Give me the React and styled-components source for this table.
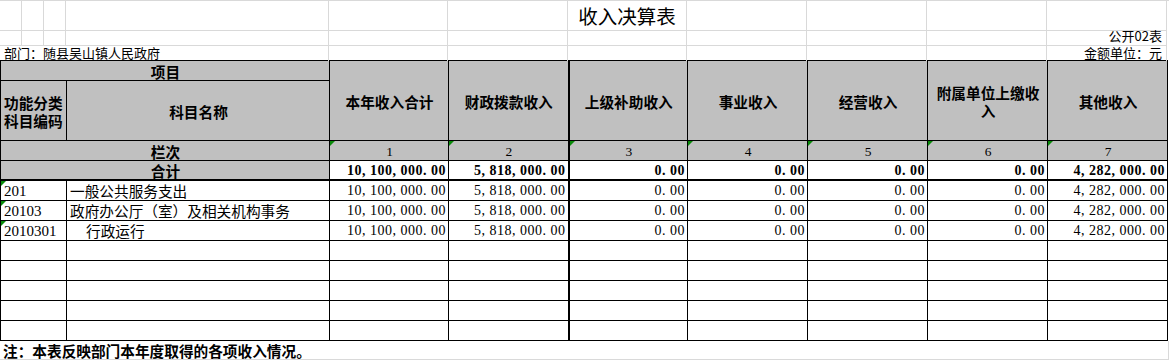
import React from "react";
import styled, { createGlobalStyle } from "styled-components";

const GlobalStyle = createGlobalStyle`
  body {
    margin: 0;
    background: #fff;
  }
`;

const COLS = [22, 22, 22, 263, 119, 120, 119, 120, 120, 120, 120];
const GRID = "#d9d9d9";
const HEAD_BG = "#c0c0c0";

const Sheet = styled.div`
  width: 1169px;
  font-family: "Noto Sans CJK SC", "Liberation Sans", sans-serif;
  color: #000;
`;

const TopRow = styled.div`
  display: grid;
  grid-template-columns: ${COLS.map((w) => w + "px").join(" ")};
  height: ${(p) => p.$h}px;
  border-top: ${(p) => (p.$first ? `1px solid ${GRID}` : "none")};
  box-sizing: border-box;
`;

const TopCell = styled.div`
  grid-column: span ${(p) => p.$span || 1};
  box-sizing: border-box;
  border-right: 1px solid ${GRID};
  border-bottom: ${(p) => (p.$last ? "none" : `1px solid ${GRID}`)};
  display: flex;
  align-items: center;
  justify-content: ${(p) =>
    p.$align === "right" ? "flex-end" : p.$align === "center" ? "center" : "flex-start"};
  padding: 0 4px;
  font-size: ${(p) => p.$size || 13}px;
  white-space: nowrap;
  overflow: visible;
`;

const Table = styled.table`
  border-collapse: collapse;
  table-layout: fixed;
  width: 1168px;
`;

const Row = styled.tr`
  height: ${(p) => p.$h}px;
`;

const Cell = styled.td`
  position: relative;
  box-sizing: border-box;
  border: 1px solid #000;
  border-left-width: ${(p) => (p.$thickLeft ? 2 : 1)}px;
  border-bottom-width: ${(p) => (p.$thickBottom ? 2 : 1)}px;
  background: ${(p) => (p.$head ? HEAD_BG : "#fff")};
  text-align: ${(p) => p.$align || "left"};
  vertical-align: middle;
  padding: 2px 2px 0 ${(p) => (p.$indent ? 19 : 3)}px;
  font-size: ${(p) => p.$size || 14.67}px;
  font-weight: ${(p) => (p.$bold ? 700 : 400)};
  line-height: ${(p) => (p.$wrap ? 18 : 16)}px;
  white-space: ${(p) => (p.$wrap ? "normal" : "nowrap")};
  overflow: hidden;
`;

const Num = styled.span`
  display: inline-block;
  vertical-align: top;
  line-height: 16px;
  font-family: "Liberation Serif", serif;
  font-size: ${(p) => p.$size || 14}px;
  letter-spacing: ${(p) => (p.$tight ? 0 : 0.5)}px;
`;

const Mark = styled.i`
  position: absolute;
  top: 0;
  left: 0;
  width: 0;
  height: 0;
  border-top: 5px solid #0a8a0a;
  border-right: 5px solid transparent;
`;

const Note = styled.div`
  height: 19px;
  box-sizing: border-box;
  border-bottom: 1px solid ${GRID};
  border-right: 1px solid ${GRID};
  padding: 2px 0 0 3px;
  font-size: 14.67px;
  font-weight: 700;
  line-height: 16px;
  white-space: nowrap;
`;

const HEADS = [
  "本年收入合计",
  "财政拨款收入",
  "上级补助收入",
  "事业收入",
  "经营收入",
  "附属单位上缴收入",
  "其他收入",
];

const VALS = [
  "10, 100, 000. 00",
  "5, 818, 000. 00",
  "0. 00",
  "0. 00",
  "0. 00",
  "0. 00",
  "4, 282, 000. 00",
];

const DATA = [
  { code: "201", name: "一般公共服务支出" },
  { code: "20103", name: "政府办公厅（室）及相关机构事务" },
  { code: "2010301", name: "行政运行", indent: true },
];

const topCells = (content) => COLS.map((_, i) => content[i] || null);

const App = () => {
  return (
    <Sheet>
      <GlobalStyle />
      <TopRow $h={26} $first>
        {topCells({ 6: "收入决算表" }).map((t, i) => (
          <TopCell key={i} $align="center" $size={19.5}>
            {t}
          </TopCell>
        ))}
      </TopRow>
      <TopRow $h={17}>
        {topCells({ 10: "公开02表" }).map((t, i) => (
          <TopCell key={i} $align="right">
            {t}
          </TopCell>
        ))}
      </TopRow>
      <TopRow $h={17}>
        <TopCell $span={4} $last>
          部门：随县吴山镇人民政府
        </TopCell>
        {COLS.slice(4).map((_, i) => (
          <TopCell key={i} $last $align="right">
            {i === 6 ? "金额单位：元" : null}
          </TopCell>
        ))}
      </TopRow>

      <Table>
        <colgroup>
          {COLS.map((w, i) => (
            <col key={i} style={{ width: w }} />
          ))}
        </colgroup>
        <tbody>
          <Row $h={20}>
            <Cell colSpan={4} $head $bold $align="center">
              项目
            </Cell>
            {HEADS.map((h, i) => (
              <Cell
                key={h}
                rowSpan={2}
                $head
                $bold
                $wrap
                $align="center"
                $thickLeft={i === 2}
              >
                {h}
              </Cell>
            ))}
          </Row>
          <Row $h={60}>
            <Cell colSpan={3} $head $bold $wrap>
              功能分类科目编码
            </Cell>
            <Cell $head $bold $align="center">
              科目名称
            </Cell>
          </Row>
          <Row $h={20}>
            <Cell colSpan={4} $head $bold $align="center">
              栏次
            </Cell>
            {HEADS.map((h, i) => (
              <Cell key={h} $head $align="center" $thickLeft={i === 2}>
                <Mark />
                <Num $tight $size={13.5}>
                  {i + 1}
                </Num>
              </Cell>
            ))}
          </Row>
          <Row $h={19}>
            <Cell colSpan={4} $head $bold $align="center" $thickBottom>
              合计
            </Cell>
            {VALS.map((v, i) => (
              <Cell
                key={i}
                $bold
                $align="right"
                $thickBottom
                $thickLeft={i === 2}
              >
                <Num>{v}</Num>
              </Cell>
            ))}
          </Row>
          {DATA.map((r) => (
            <Row key={r.code} $h={20}>
              <Cell colSpan={3}>
                <Mark />
                <Num $size={15} $tight>
                  {r.code}
                </Num>
              </Cell>
              <Cell $indent={r.indent}>{r.name}</Cell>
              {VALS.map((v, i) => (
                <Cell key={i} $align="right" $thickLeft={i === 2}>
                  <Num>{v}</Num>
                </Cell>
              ))}
            </Row>
          ))}
          {[0, 1, 2, 3, 4].map((n) => (
            <Row key={n} $h={20}>
              <Cell colSpan={3} />
              <Cell />
              {HEADS.map((h, i) => (
                <Cell key={h} $thickLeft={i === 2} />
              ))}
            </Row>
          ))}
        </tbody>
      </Table>
      <Note>注：本表反映部门本年度取得的各项收入情况。</Note>
    </Sheet>
  );
};

export default App;
